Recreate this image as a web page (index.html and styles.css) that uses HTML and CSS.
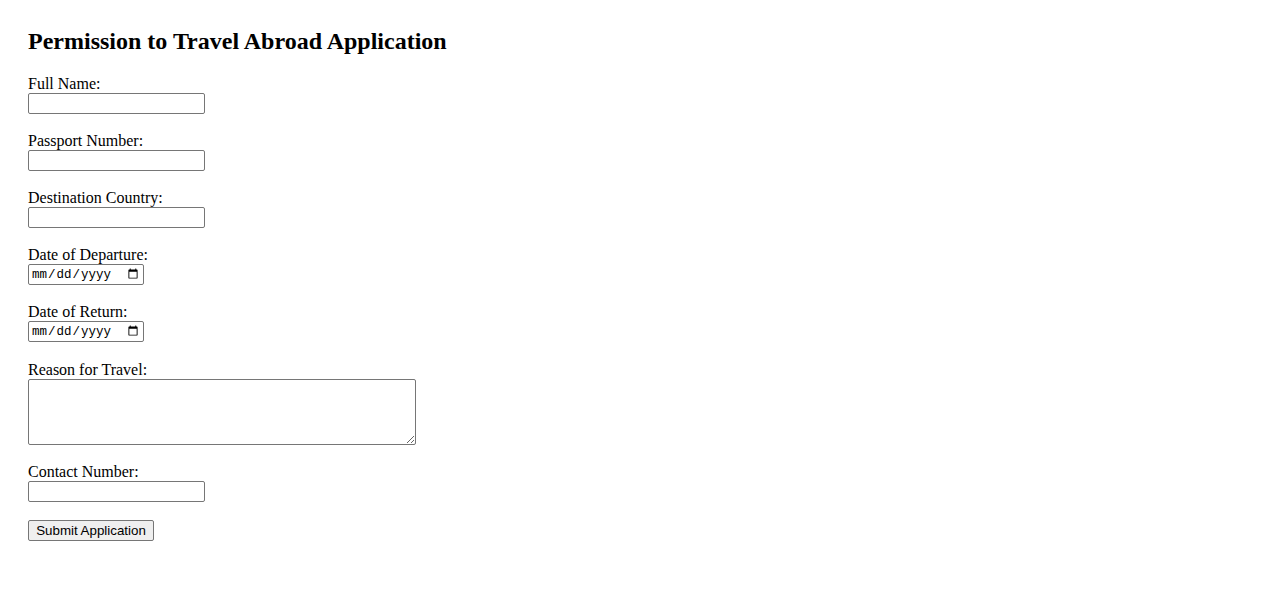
FILE: index.html
```html
<!DOCTYPE html>
<html lang="en">
<head>
<meta charset="utf-8">
<title>Permission to Travel Abroad Application</title>
<link rel="stylesheet" href="styles.css">
</head>
<body>
<main class="page">
  <h2 class="title">Permission to Travel Abroad Application</h2>
  <form class="form" onsubmit="return false;">
    <div class="field">
      <label class="label" for="name">Full Name:</label>
      <input class="text-input" type="text" id="name" name="name">
    </div>
    <div class="field">
      <label class="label" for="passport">Passport Number:</label>
      <input class="text-input" type="text" id="passport" name="passport">
    </div>
    <div class="field">
      <label class="label" for="destination">Destination Country:</label>
      <input class="text-input" type="text" id="destination" name="destination">
    </div>
    <div class="field">
      <label class="label" for="departure">Date of Departure:</label>
      <input class="date-input" type="date" id="departure" name="departure">
    </div>
    <div class="field">
      <label class="label" for="return">Date of Return:</label>
      <input class="date-input" type="date" id="return" name="return">
    </div>
    <div class="field field-reason">
      <label class="label" for="reason">Reason for Travel:</label>
      <textarea class="textarea" id="reason" name="reason"></textarea>
    </div>
    <div class="field">
      <label class="label" for="contact">Contact Number:</label>
      <input class="text-input" type="tel" id="contact" name="contact">
    </div>
    <div class="actions">
      <button class="submit" type="submit">Submit Application</button>
    </div>
  </form>
</main>
</body>
</html>
```
FILE: styles.css
```css
html, body {
  margin: 0;
  padding: 0;
  background: #ffffff;
}

body {
  font-family: "Liberation Serif", "Times New Roman", serif;
  font-size: 16px;
  color: #000000;
}

.page {
  padding: 28px;
}

.title {
  margin: 0 0 20px 0;
  font-size: 24px;
  line-height: 27px;
  font-weight: bold;
}

.form {
  display: flex;
  flex-direction: column;
  align-items: flex-start;
}

.field {
  display: flex;
  flex-direction: column;
  align-items: flex-start;
  margin-bottom: 18px;
}

.field-reason {
  padding-top: 1px;
}

.label {
  display: block;
  line-height: 18px;
  height: 18px;
}

.text-input,
.date-input,
.textarea {
  box-sizing: border-box;
  margin: 0;
  border: 1px solid #767676;
  border-radius: 2px;
  background: #ffffff;
  font-family: "Liberation Sans", Arial, sans-serif;
  font-size: 13.33px;
  padding: 1px 2px;
}

.text-input {
  width: 177px;
  height: 21px;
}

.date-input {
  width: 116px;
  height: 21px;
  font-family: "Liberation Mono", "DejaVu Sans Mono", monospace;
  font-size: 12.5px;
  color: #000000;
}

.textarea {
  width: 388px;
  height: 66px;
  resize: both;
  font-family: "Liberation Mono", monospace;
}

.submit {
  box-sizing: border-box;
  margin: 0;
  height: 21px;
  width: 126px;
  padding: 1px 6px;
  background: #efefef;
  border: 1px solid #767676;
  border-radius: 2px;
  font-family: "Liberation Sans", Arial, sans-serif;
  font-size: 13.33px;
  color: #000000;
}
```
